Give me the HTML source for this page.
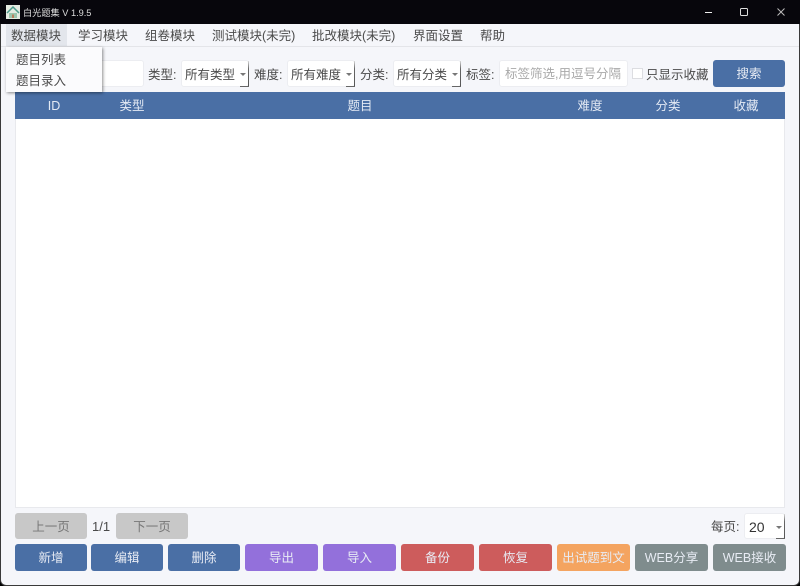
<!DOCTYPE html>
<html lang="zh"><head><meta charset="utf-8"><title>白光题集</title>
<style>
html,body{margin:0;padding:0;width:800px;height:586px;overflow:hidden;background:#000}
body{position:relative;font-family:"Liberation Sans","Noto Sans CJK SC",sans-serif;font-size:12.5px;color:#4a4a4a}
div,span{position:absolute;box-sizing:border-box;white-space:nowrap}
#win{left:0;top:0;width:800px;height:586px;background:#f5f6fa;border:solid #3a3a3a;border-width:0 1px 1px 1px;border-radius:0 0 6px 6px;overflow:hidden}
#title{left:0;top:0;width:800px;height:24px;background:#07060c}
.t{color:#4a4a4a;line-height:18px;height:18px}
.btn{height:27px;border-radius:3px;color:#e8ecf4;text-align:center;line-height:29px;font-size:12.5px;background:#4a6fa5;top:544px}
.pur{background:#9370db}.red{background:#cd5c5c}.org{background:#f4a460}.gry{background:#7f8c8d}
.in{background:#fff;border:1px solid #ecedf1;border-radius:3px;height:27px;top:60px;line-height:27px}
.sel{background:#fff;border-radius:3px;height:27px;top:60px;line-height:29px;padding-left:3px;color:#4a4a4a;border:1px solid #ecedf1}
.sel i{position:absolute;right:2px;top:12px;width:0;height:0;border-left:3px solid transparent;border-right:3px solid transparent;border-top:3px solid #777}
.sel b{position:absolute;right:-1px;top:0;width:1px;height:26px;background:linear-gradient(#d8d8d8,#666 30%,#555)}
.sel u{position:absolute;right:-1px;bottom:-1px;width:9px;height:1px;background:#666}
.th{top:92px;height:27px;line-height:29px;color:#e4eaf4;text-align:center}
</style></head><body>
<div id="win"></div>
<div id="title"></div>
<svg style="position:absolute;left:6px;top:5px" width="14" height="14" viewBox="0 0 14 14"><rect width="14" height="14" fill="#e4ebe2"/><path d="M1 8 7 2l6 6" fill="none" stroke="#4c9c8c" stroke-width="1.5"/><path d="M3 8h8v5H3z" fill="#9cc5ad"/><rect x="6" y="9.500" width="2" height="3.500" fill="#b8805f"/></svg>
<div style="left:23px;top:4px;color:#ddd;font-size:9.2px;line-height:18px">白光题集 V 1.9.5</div>
<svg style="position:absolute;left:700px;top:0" width="100" height="24"><path d="M5 12.500h7" stroke="#eee" stroke-width="1"/><rect x="40.500" y="8.500" width="7" height="7" rx="1" fill="none" stroke="#ddd"/><path d="M77.500 8.500l7 7M84.500 8.500l-7 7" stroke="#bbb" stroke-width="1" fill="none"/></svg>

<div style="left:1px;top:46px;width:798px;height:1px;background:#e4e5e9"></div>
<div style="left:6px;top:24px;width:61px;height:22px;background:#e3e6ec"></div>
<div class="t" style="left:11px;top:27px">数据模块</div>
<div class="t" style="left:78px;top:27px">学习模块</div>
<div class="t" style="left:145px;top:27px">组卷模块</div>
<div class="t" style="left:212px;top:27px">测试模块(未完)</div>
<div class="t" style="left:312px;top:27px">批改模块(未完)</div>
<div class="t" style="left:413px;top:27px">界面设置</div>
<div class="t" style="left:480px;top:27px">帮助</div>

<div class="in" style="left:90px;width:54px"></div>
<div class="t" style="left:148px;top:66px">类型:</div>
<div class="sel" style="left:181px;width:68px">所有类型<i></i><b></b><u></u></div>
<div class="t" style="left:254px;top:66px">难度:</div>
<div class="sel" style="left:287px;width:68px">所有难度<i></i><b></b><u></u></div>
<div class="t" style="left:360px;top:66px">分类:</div>
<div class="sel" style="left:393px;width:68px">所有分类<i></i><b></b><u></u></div>
<div class="t" style="left:466px;top:66px">标签:</div>
<div class="in" style="left:499px;width:129px;padding-left:5px;color:#a9a9a9">标签筛选,用逗号分隔</div>
<div style="left:632px;top:68px;width:11px;height:11px;background:#fff;border:1px solid #dcdde1"></div>
<div class="t" style="left:646px;top:66px">只显示收藏</div>
<div class="btn" style="left:713px;top:60px;width:72px">搜索</div>

<div style="left:15px;top:92px;width:770px;height:27px;background:#4a6fa5"></div>
<div style="left:15px;top:119px;width:770px;height:389px;background:#fff;border:solid #e8e9ed;border-width:0 1px 1px 1px"></div>
<div class="th" style="left:34px;width:40px">ID</div>
<div class="th" style="left:112px;width:40px">类型</div>
<div class="th" style="left:340px;width:40px">题目</div>
<div class="th" style="left:570px;width:40px">难度</div>
<div class="th" style="left:648px;width:40px">分类</div>
<div class="th" style="left:726px;width:40px">收藏</div>

<div style="left:6px;top:47px;width:96px;height:45px;background:#fbfbfd;box-shadow:1px 1px 3px rgba(0,0,0,.45)"></div>
<div class="t" style="left:16px;top:51px">题目列表</div>
<div class="t" style="left:16px;top:72px">题目录入</div>

<div class="btn" style="left:15px;top:513px;width:72px;height:26px;line-height:28px;background:#c8c8c8;color:#777">上一页</div>
<div class="t" style="left:92px;top:518px;font-size:13px">1/1</div>
<div class="btn" style="left:116px;top:513px;width:72px;height:26px;line-height:28px;background:#c8c8c8;color:#777">下一页</div>
<div class="t" style="left:711px;top:518px">每页:</div>
<div class="sel" style="left:744px;top:513px;width:41px;height:26px;line-height:26px;padding-left:4px;font-size:14px;color:#333">20<i style="top:12px"></i><b style="height:25px"></b><u></u></div>

<div class="btn" style="left:15px;width:72px">新增</div>
<div class="btn" style="left:91px;width:72px">编辑</div>
<div class="btn" style="left:168px;width:72px">删除</div>
<div class="btn pur" style="left:245px;width:73px">导出</div>
<div class="btn pur" style="left:323px;width:73px">导入</div>
<div class="btn red" style="left:401px;width:73px">备份</div>
<div class="btn red" style="left:479px;width:73px">恢复</div>
<div class="btn org" style="left:557px;width:73px">出试题到文</div>
<div class="btn gry" style="left:635px;width:73px">WEB分享</div>
<div class="btn gry" style="left:713px;width:73px">WEB接收</div>
</body></html>
